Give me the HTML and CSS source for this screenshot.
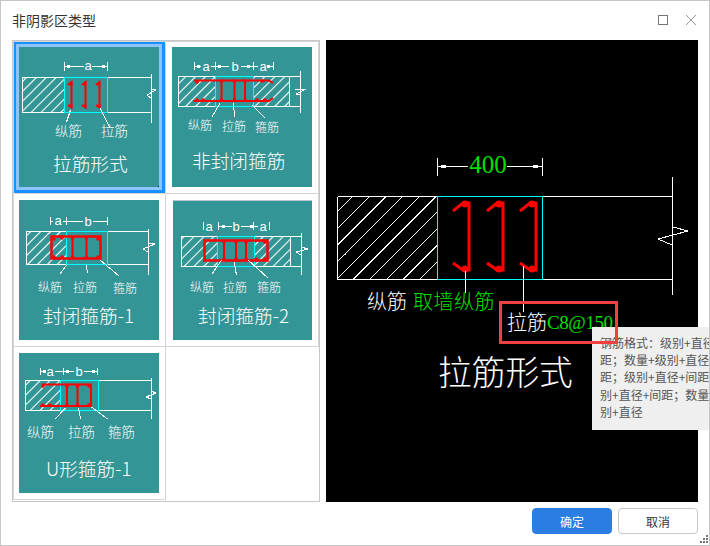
FILE: index.html
```html
<!DOCTYPE html>
<html lang="zh-CN">
<head>
<meta charset="utf-8">
<title>非阴影区类型</title>
<link rel="stylesheet" href="styles.css">
</head>
<body>
<div class="dialog">
  <header class="titlebar">
    <span class="title">非阴影区类型</span>
    <span class="win-icons">
      <svg class="win-icon" width="10" height="10" viewBox="0 0 10 10"><rect x="0.5" y="0.5" width="9" height="9" class="ico-max"/></svg>
      <svg class="win-icon" width="12" height="12" viewBox="0 0 12 12"><path d="M1 1L11 11M11 1L1 11" class="ico-close"/></svg>
    </span>
  </header>

  <main class="content">
    <div class="picker">
      <div class="grid">
        <!-- 拉筋形式 -->
        <div class="cell first-row first-col selected">
          <svg class="thumb" width="140" height="140" viewBox="19 47 140 140">
            <defs>
              <pattern id="hatch" patternUnits="userSpaceOnUse" width="7" height="7" patternTransform="rotate(45)"><path d="M3.5 0V7" class="hatch-line"/></pattern>
              <g id="tie-small"><path d="M68 85L71.5 82V107.5L68 105" class="red"/><circle cx="71" cy="84" r="1.8" class="red-dot"/><circle cx="71" cy="106" r="1.8" class="red-dot"/></g>
            </defs>
            <rect x="22.5" y="77.5" width="42" height="35" class="hatch-area"/>
            <path d="M22.5 77.5H151.5M22.5 112.5H151.5M151.5 74V123M152 89L156 90L147 95L152 99" class="wht"/>
            <rect x="64.5" y="77.5" width="43" height="35" class="cyn"/>
            <path d="M64.5 62V71M107.5 62V71M64.5 66.5H84M92 66.5H107.5" class="wht"/>
            <rect x="67" y="65" width="3" height="3" class="wht-fill"/><rect x="102" y="65" width="3" height="3" class="wht-fill"/>
            <text x="88" y="70" class="t-dim t-mid">a</text>
            <use href="#tie-small"/><use href="#tie-small" x="14"/><use href="#tie-small" x="28"/>
            <path d="M70.5 110L66.5 122M100 108L110 128" class="wht"/>
            <text x="55" y="136" class="t-lab14">纵筋</text>
            <text x="101" y="136" class="t-lab14">拉筋</text>
            <text x="53" y="171" class="t-title">拉筋形式</text>
            <rect x="158" y="186" width="1" height="1" class="speck"/>
          </svg>
        </div>

        <!-- 非封闭箍筋 -->
        <div class="cell first-row">
          <svg class="thumb" width="140" height="140" viewBox="172 47 140 140">
            <rect x="178.5" y="76.5" width="37" height="30" class="hatch-area"/>
            <rect x="253.5" y="76.5" width="36" height="30" class="hatch-area"/>
            <path d="M178.5 76.5H300.5M178.5 106.5H300.5M289.5 76.5V106.5M300.5 71V113M295 89L306 89L296 94L300 94" class="wht"/>
            <rect x="215.5" y="76.5" width="38" height="30" class="cyn"/>
            <path d="M194.5 62V70M215.5 62V70M253.5 62V70M273.5 62V70M194.5 66.5H201M211 66.5H229M241 66.5H258M268 66.5H273" class="wht"/>
            <rect x="197" y="65" width="3" height="3" class="wht-fill"/><rect x="218" y="65" width="3" height="3" class="wht-fill"/><rect x="247" y="65" width="3" height="3" class="wht-fill"/><rect x="267" y="65" width="3" height="3" class="wht-fill"/>
            <text x="206" y="70.5" class="t-dim t-mid">a</text><text x="235" y="71" class="t-dim t-mid">b</text><text x="263" y="70.5" class="t-dim t-mid">a</text>
            <path d="M194 80.5H269L273 83M193 101H269L273 98M221.5 81V101M234.5 81V101M245 81V101" class="red"/>
            <circle cx="197" cy="82" r="1.8" class="red-dot"/><circle cx="221.5" cy="81" r="1.8" class="red-dot"/><circle cx="234.5" cy="81" r="1.8" class="red-dot"/><circle cx="245" cy="81" r="1.8" class="red-dot"/><circle cx="262" cy="81" r="1.8" class="red-dot"/>
            <circle cx="197" cy="100" r="1.8" class="red-dot"/><circle cx="203" cy="100" r="1.8" class="red-dot"/><circle cx="221.5" cy="100" r="1.8" class="red-dot"/><circle cx="234.5" cy="100" r="1.8" class="red-dot"/><circle cx="245" cy="100" r="1.8" class="red-dot"/><circle cx="257" cy="100" r="1.8" class="red-dot"/><circle cx="265" cy="100" r="1.8" class="red-dot"/>
            <path d="M220 103L212 117M233 103L235 117M252 105L265 118" class="wht"/>
            <text x="188" y="130" class="t-lab">纵筋</text><text x="222" y="131" class="t-lab">拉筋</text><text x="255" y="132" class="t-lab">箍筋</text>
            <text x="192" y="168" class="t-title">非封闭箍筋</text>
          </svg>
        </div>

        <!-- 封闭箍筋-1 -->
        <div class="cell first-col">
          <svg class="thumb" width="140" height="140" viewBox="19 200 140 140">
            <rect x="26.5" y="231.5" width="40" height="33" class="hatch-area"/>
            <path d="M26.5 231.5H148.5M26.5 264.5H148.5M148.5 229V275M148 243L155 244L143 249L148 252" class="wht"/>
            <rect x="66.5" y="231.5" width="41" height="33" class="cyn"/>
            <path d="M50.5 217V225M66.5 217V225M107.5 217V225M50.5 221H53M63 221H66M66.5 221H83M93 221H107.5" class="wht"/>
            <text x="58" y="225" class="t-dim t-mid">a</text><text x="88" y="226" class="t-dim t-mid">b</text>
            <rect x="51.5" y="236.5" width="49" height="22" class="red-box"/>
            <path d="M72.5 237V258M86.5 237V258" class="red"/>
            <circle cx="54" cy="239" r="1.8" class="red-dot"/><circle cx="62" cy="238" r="1.8" class="red-dot"/><circle cx="72.5" cy="238" r="1.8" class="red-dot"/><circle cx="86.5" cy="238" r="1.8" class="red-dot"/><circle cx="98" cy="239" r="1.8" class="red-dot"/>
            <circle cx="54" cy="257" r="1.8" class="red-dot"/><circle cx="62" cy="257" r="1.8" class="red-dot"/><circle cx="72.5" cy="257" r="1.8" class="red-dot"/><circle cx="86.5" cy="257" r="1.8" class="red-dot"/><circle cx="98" cy="257" r="1.8" class="red-dot"/>
            <path d="M66.5 265L60 274M86 265L87.5 273M100 260L119 276" class="wht"/>
            <text x="38" y="292" class="t-lab">纵筋</text><text x="73" y="292" class="t-lab">拉筋</text><text x="113" y="293" class="t-lab">箍筋</text>
            <text x="43" y="323" class="t-title">封闭箍筋-1</text>
          </svg>
        </div>

        <!-- 封闭箍筋-2 -->
        <div class="cell">
          <svg class="thumb" width="140" height="140" viewBox="172 200 140 140">
            <path d="M173 200.5H312" class="edge"/>
            <rect x="172" y="200" width="1" height="140" class="gap-strip"/>
            <rect x="181.5" y="236.5" width="36" height="30" class="hatch-area"/>
            <rect x="254.5" y="236.5" width="36" height="30" class="hatch-area"/>
            <path d="M181.5 236.5H301.5M181.5 266.5H301.5M290.5 236.5V266.5M301.5 233V275M301 247L308 249L296 252L301 255" class="wht"/>
            <rect x="217.5" y="236.5" width="37" height="30" class="cyn"/>
            <path d="M203.5 222V230M218.5 222V230M253.5 222V230M269.5 222V230M219 226.5H232M241 226.5H253M254 226.5H258" class="wht"/>
            <rect x="222" y="225" width="3" height="3" class="wht-fill"/><rect x="250" y="225" width="3" height="3" class="wht-fill"/>
            <text x="209" y="230.5" class="t-dim t-mid">a</text><text x="236" y="231" class="t-dim t-mid">b</text><text x="263" y="230.5" class="t-dim t-mid">a</text>
            <rect x="204.5" y="240.5" width="63" height="20" class="red-box"/>
            <path d="M224 241V260M236 241V260M246 241V260" class="red"/>
            <circle cx="224" cy="242" r="1.8" class="red-dot"/><circle cx="236" cy="242" r="1.8" class="red-dot"/><circle cx="246" cy="242" r="1.8" class="red-dot"/><circle cx="265" cy="242" r="1.8" class="red-dot"/>
            <circle cx="224" cy="259" r="1.8" class="red-dot"/><circle cx="236" cy="259" r="1.8" class="red-dot"/><circle cx="246" cy="259" r="1.8" class="red-dot"/><circle cx="256" cy="259" r="1.8" class="red-dot"/><circle cx="265" cy="259" r="1.8" class="red-dot"/>
            <path d="M221.5 260L212 274M234 262L236.5 275M248 260L268 278" class="wht"/>
            <text x="190" y="292" class="t-lab">纵筋</text><text x="223" y="292" class="t-lab">拉筋</text><text x="257" y="292" class="t-lab">箍筋</text>
            <text x="198" y="323" class="t-title">封闭箍筋-2</text>
          </svg>
        </div>

        <!-- U形箍筋-1 -->
        <div class="cell first-col">
          <svg class="thumb" width="140" height="140" viewBox="19 353 140 140">
            <rect x="25.5" y="380.5" width="35" height="30" class="hatch-area"/>
            <path d="M25.5 380.5H151.5M25.5 410.5H151.5M151.5 378V419M151 391L156 393L146 397L151 399" class="wht"/>
            <rect x="60.5" y="380.5" width="38" height="30" class="cyn"/>
            <path d="M40.5 368V375M63.5 368V375M97.5 368V375M40.5 371.5H45M55 371.5H74M84 371.5H97" class="wht"/>
            <rect x="43" y="370" width="3" height="3" class="wht-fill"/><rect x="66" y="370" width="3" height="3" class="wht-fill"/><rect x="92" y="370" width="3" height="3" class="wht-fill"/>
            <text x="50" y="375.5" class="t-dim t-mid">a</text><text x="79" y="376" class="t-dim t-mid">b</text>
            <path d="M42 384.5H91V406H40M67 385V406M77.5 385V406" class="red"/>
            <circle cx="43" cy="386" r="1.8" class="red-dot"/><circle cx="67" cy="386" r="1.8" class="red-dot"/><circle cx="77.5" cy="386" r="1.8" class="red-dot"/><circle cx="89" cy="386" r="1.8" class="red-dot"/>
            <circle cx="43" cy="405" r="1.8" class="red-dot"/><circle cx="50" cy="405" r="1.8" class="red-dot"/><circle cx="67" cy="405" r="1.8" class="red-dot"/><circle cx="77.5" cy="405" r="1.8" class="red-dot"/><circle cx="89" cy="405" r="1.8" class="red-dot"/>
            <path d="M65.5 408L55 419M78.5 408L80.5 419M91.5 407L107.5 419" class="wht"/>
            <text x="27" y="437" class="t-lab14">纵筋</text><text x="68" y="437" class="t-lab14">拉筋</text><text x="108" y="437" class="t-lab14">箍筋</text>
            <text x="46" y="476" class="t-title">U形箍筋-1</text>
          </svg>
        </div>

        <div class="cell-empty"></div>
      </div>
    </div>

    <div class="preview">
      <svg class="drawing" width="372" height="462" viewBox="326 40 372 462">
        <defs>
          <g id="tie-big">
            <path d="M453 211L463 203H469V270H463L453 263" class="red-big"/>
            <circle cx="465" cy="204" r="3.5" class="red-dot"/><circle cx="465" cy="269" r="3.5" class="red-dot"/>
          </g>
        </defs>
        <path d="M337.5 211.8L352.8 196.5M337.5 228.5L369.5 196.5M337.5 245.2L386.2 196.5M337.5 261.8L402.8 196.5M337.5 278.5L419.5 196.5M353.2 279.5L436.2 196.5M369.8 279.5L437.5 211.8M386.5 279.5L437.5 228.5M403.2 279.5L437.5 245.2M419.8 279.5L437.5 261.8" class="wht"/>
        <path d="M337.5 196.5H672.5M337.5 279.5H672.5M337.5 196.5V279.5M672.5 177V295M673 227L688 231L658 239L672 245" class="wht"/>
        <rect x="437.5" y="196.5" width="105" height="83" class="cyn"/>
        <path d="M437.5 158V176M542.5 158V176M437.5 166.5H468M507 166.5H542" class="wht"/>
        <rect x="441" y="165" width="5" height="3" class="wht-fill"/><rect x="533" y="165" width="5" height="3" class="wht-fill"/>
        <text x="488" y="173" class="t-400 t-mid">400</text>
        <use href="#tie-big"/><use href="#tie-big" x="34"/><use href="#tie-big" x="67"/>
        <path d="M465.5 271V293M523.5 266V312" class="wht"/>
        <text x="367" y="309" class="t-main">纵筋</text>
        <text x="413" y="309" class="t-main t-green">取墙纵筋</text>
        <text x="507" y="330" class="t-main">拉筋</text>
        <text x="547" y="329" textLength="66" lengthAdjust="spacing" class="t-code">C8@150</text>
        <text x="438" y="385" class="t-big">拉筋形式</text>
      </svg>
    </div>
  </main>

  <footer class="actions">
    <button class="btn btn-primary" type="button">确定</button>
    <button class="btn" type="button">取消</button>
  </footer>

  <svg class="grip" width="9" height="9" viewBox="0 0 9 9"><path d="M6 0h2v2H6zM3 3h2v2H3zM6 3h2v2H6zM0 6h2v2H0zM3 6h2v2H3zM6 6h2v2H6z" class="grip-dots"/></svg>

  <div class="tooltip">钢筋格式：级别+直径+间<br>距；数量+级别+直径+间<br>距；级别+直径+间距；级<br>别+直径+间距；数量+级<br>别+直径</div>
  <div class="callout"></div>
</div>
</body>
</html>
```
FILE: styles.css
```css
* { box-sizing: border-box; }
html, body { margin: 0; padding: 0; background: #fff; }
body { width: 710px; height: 546px; overflow: hidden; font-family: "Noto Sans CJK SC", "Noto Sans", sans-serif; }

.dialog {
  position: relative;
  width: 710px;
  height: 546px;
  border: 1px solid #c6c6c6;
  display: flex;
  flex-direction: column;
  overflow: hidden;
  background: #fff;
}

.titlebar {
  height: 39px;
  padding: 0 12px 1px 11px;
  display: flex;
  align-items: center;
  justify-content: space-between;
  flex: none;
}
.title { font-size: 14px; color: #333; line-height: 20px; }
.win-icons { display: flex; align-items: center; gap: 17px; }
.win-icon { display: block; }
.ico-max { fill: none; stroke: #777; stroke-width: 1; }
.ico-close { fill: none; stroke: #999; stroke-width: 1; }

.content {
  flex: none;
  height: 462px;
  display: flex;
  gap: 6px;
  padding: 0 11px;
}

.picker {
  width: 308px;
  height: 462px;
  border: 1px solid #c6c6c6;
  flex: none;
}
.grid {
  display: grid;
  grid-template-columns: 152px 153px;
  grid-template-rows: 152px 153px 153px;
  border-left: 1px solid #d4d4d4;
  border-top: 1px solid #d4d4d4;
}
.cell {
  padding: 6px 0 0 6px;
  border-right: 1px solid #d4d4d4;
  border-bottom: 1px solid #d4d4d4;
}
.first-row { padding-top: 5px; }
.first-col { padding-left: 5px; }
.cell.selected {
  padding: 3px 0 0 3px;
  border-style: solid;
  border-color: #1890ff;
  border-width: 2px 3px 3px 2px;
  background: #8fc3fb;
  width: 151px;
  height: 151px;
  box-shadow: 1px 1px 0 #d4d4d4;
}
.thumb { display: block; background: #339595; }
.edge { fill: none; stroke: #b8c4d0; stroke-width: 1; shape-rendering: crispEdges; }
.gap-strip { fill: #fff; }
.speck { fill: #111; }

.wht { fill: none; stroke: #fff; stroke-width: 1; shape-rendering: crispEdges; }
.wht-fill { fill: #fff; }
.cyn { fill: none; stroke: #00ffff; stroke-width: 1; shape-rendering: crispEdges; }
.red { fill: none; stroke: #ff0000; stroke-width: 2; }
.red-box { fill: none; stroke: #ff0000; stroke-width: 2.5; }
.red-big { fill: none; stroke: #ff0000; stroke-width: 3; }
.red-dot { fill: #ff0000; }
.hatch-line { fill: none; stroke: #fff; stroke-width: 1.1; }
.hatch-area { fill: url(#hatch); stroke: #fff; stroke-width: 1; shape-rendering: crispEdges; }

.thumb text { fill: #fff; }
.t-mid { text-anchor: middle; }
.t-dim { font-family: "Liberation Sans", sans-serif; font-size: 13px; }
.t-lab { font-size: 12px; font-weight: 300; }
.t-lab14 { font-size: 13.5px; font-weight: 300; }
.t-title { font-size: 18.7px; font-weight: 300; fill: #e4f2f2; }

.preview { width: 372px; height: 462px; background: #000; flex: none; }
.drawing { display: block; }
.drawing text { fill: #fff; }
.drawing .t-400 { fill: #00e000; font-family: "Liberation Serif", serif; font-size: 25px; }
.t-main { font-size: 20px; font-weight: 300; }
.drawing .t-green { fill: #00e000; letter-spacing: 0.5px; }
.drawing .t-code { fill: #00e000; font-family: "Liberation Serif", serif; font-size: 19px; }
.t-big { font-size: 33.7px; font-weight: 300; }

.actions {
  flex: 1;
  display: flex;
  justify-content: flex-end;
  gap: 6px;
  padding: 6px 11px 0 0;
}
.btn {
  width: 80px;
  height: 26px;
  padding: 0;
  background: #fff;
  border: 1px solid #c8c8c8;
  border-radius: 4px;
  font-family: "Noto Sans CJK SC", sans-serif;
  font-size: 12px;
  color: #333;
}
.btn-primary { background: #2b7de1; border-color: #2b7de1; color: #fff; }

.grip { position: absolute; right: 0; bottom: 1px; }
.grip-dots { fill: #777; }

.tooltip {
  position: absolute;
  left: 591px;
  top: 326px;
  width: 130px;
  height: 103px;
  padding: 7px 8px;
  background: #efefef;
  color: #555;
  font-family: "Noto Sans CJK JP", "Noto Sans CJK SC", sans-serif;
  font-size: 12px;
  line-height: 17.2px;
  white-space: nowrap;
}
.callout {
  position: absolute;
  left: 498px;
  top: 300px;
  width: 119px;
  height: 43px;
  border: 3px solid #f24040;
}
```
